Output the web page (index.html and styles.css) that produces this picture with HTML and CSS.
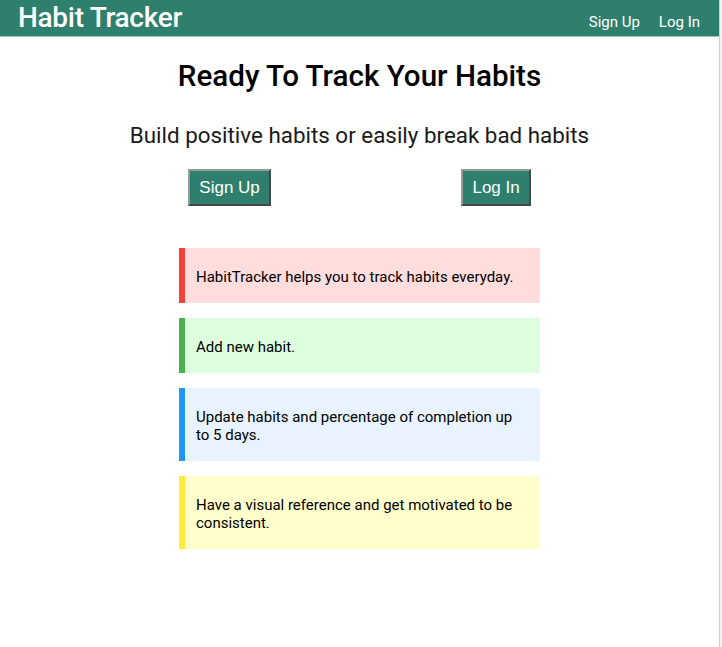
FILE: index.html
```html
<!DOCTYPE html>
<html lang="en">
<head>
<meta charset="utf-8">
<title>Habit Tracker</title>
<link rel="stylesheet" href="styles.css">
</head>
<body>
<div class="page">
  <header class="topbar">
    <div class="brand">Habit Tracker</div>
    <nav class="nav">
      <a href="#" class="nav-link">Sign Up</a>
      <a href="#" class="nav-link">Log In</a>
    </nav>
  </header>
  <main class="main">
    <h1 class="title">Ready To Track Your Habits</h1>
    <h2 class="subtitle">Build positive habits or easily break bad habits</h2>
    <div class="actions">
      <button class="btn">Sign Up</button>
      <button class="btn">Log In</button>
    </div>
    <div class="notes">
      <div class="note note-red"><p>HabitTracker helps you to track habits everyday.</p></div>
      <div class="note note-green"><p>Add new habit.</p></div>
      <div class="note note-blue"><p>Update habits and percentage of completion up to 5 days.</p></div>
      <div class="note note-yellow"><p>Have a visual reference and get motivated to be consistent.</p></div>
    </div>
  </main>
</div>
</body>
</html>
```
FILE: styles.css
```css
html {
  background: #f1f1f1;
  height: 100%;
}
body {
  margin: 0;
  height: 100%;
  font-family: Roboto, "Liberation Sans", sans-serif;
}
.page {
  width: 719px;
  min-height: 100%;
  background: #fff;
  border-right: 1px solid #cfcfcf;
}
.topbar {
  height: 36px;
  background: #2e7f6d;
  border-bottom: 1px solid #9dc7bd;
  display: flex;
  align-items: flex-end;
  justify-content: space-between;
  padding: 0 19px 0 18px;
  color: #fff;
}
.brand {
  font-size: 28px;
  font-weight: 500;
  line-height: 36px;
  letter-spacing: -0.3px;
}
.nav {
  display: flex;
  gap: 19px;
  padding-bottom: 5px;
}
.nav-link {
  color: #fff;
  text-decoration: none;
  font-size: 15px;
}
.main {
  display: flex;
  flex-direction: column;
  align-items: center;
}
.title {
  margin: 22px 0 0;
  font-size: 29.6px;
  font-weight: 500;
  line-height: 34px;
  color: #000;
}
.subtitle {
  margin: 28px 0 0;
  font-size: 22.4px;
  font-weight: 400;
  line-height: 28px;
  color: #1a1a1a;
}
.actions {
  width: 533px;
  display: flex;
  justify-content: space-around;
  margin-top: 20px;
}
.btn {
  font-family: "Liberation Sans", Arial, sans-serif;
  font-size: 17px;
  color: #fff;
  background: #2e7f6d;
  border: 2px outset #9a9a9a;
  padding: 7px 9px;
  height: 37px;
}
.notes {
  margin-top: 42px;
  width: 361px;
  display: flex;
  flex-direction: column;
  gap: 15px;
}
.note {
  border-left: 6px solid;
  padding: 0 14px 0 11px;
}
.note p {
  margin: 20px 0 17px;
  font-size: 15px;
  line-height: 18px;
  color: #000;
}
.note-red { background: #ffdddd; border-color: #f44336; }
.note-green { background: #ddffdd; border-color: #4caf50; }
.note-blue { background: #e7f3fe; border-color: #2196f3; }
.note-yellow { background: #ffffcc; border-color: #ffeb3b; }
```
